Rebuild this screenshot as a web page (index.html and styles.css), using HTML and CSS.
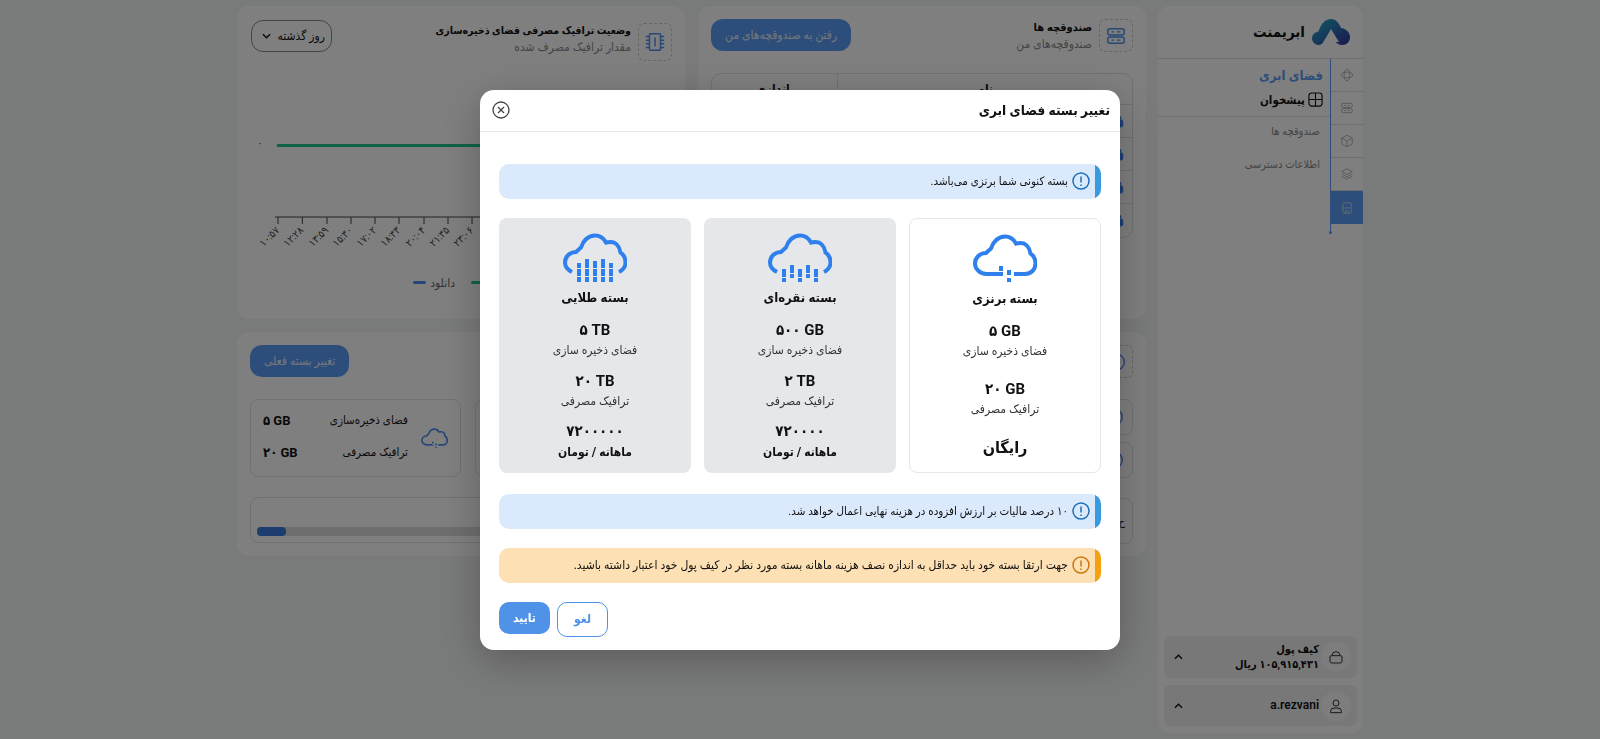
FILE: index.html
```html
<!DOCTYPE html>
<html lang="fa" dir="rtl">

<head>
    <meta charset="UTF-8">
    <meta name="viewport" content="width=device-width, initial-scale=1.0">
    <title>تغییر بسته فضای ابری</title>
    <link rel="stylesheet" href="styles.css">
</head>

<body>
    <svg class="defs">
        <defs>
            <linearGradient id="logo-grad" x1="0" y1="0" x2="1" y2="1">
                <stop offset="0" stop-color="#1cb5c9" />
                <stop offset="1" stop-color="#3b2f9e" />
            </linearGradient>
            <symbol id="i-server" viewBox="0 0 24 24">
                <rect x="3" y="4" width="18" height="7" rx="2.5" />
                <rect x="3" y="13" width="18" height="7" rx="2.5" />
                <path d="M7 7.5h3M13 7.5h4M7 16.5h3M13 16.5h4" />
            </symbol>
            <symbol id="i-chip" viewBox="0 0 24 24">
                <rect x="6" y="3" width="12" height="18" rx="1" />
                <path d="M12 7v10M2 6h4M2 10h4M2 14h4M2 18h4M18 6h4M18 10h4M18 14h4M18 18h4" />
            </symbol>
            <symbol id="i-lock" viewBox="0 0 24 24">
                <path d="M7 11V8a5 5 0 0 1 10 0v3" fill="none" />
                <rect x="4" y="11" width="16" height="11" rx="3" fill="currentColor" />
            </symbol>
        </defs>
    </svg>

    <div class="page">
        <!-- منوی کناری -->
        <aside class="sidebar">
            <div class="logo-row">
                <svg class="logo" viewBox="0 0 38 26">
                    <path fill="url(#logo-grad)" d="M7 26C3 26 0 23 0 19.5C0 15.5 3 13 6.500 12.500C9 5 13 0 19 0C24 0 27 4 29 9C34 9.500 38 13.500 38 18C38 22.500 35 26 30 26C27 26 25 24.500 23.500 23H27L19 10L11 23.500C10 25 8.500 26 7 26Z" />
                </svg>
                <span class="logo-text">ابریمنت</span>
            </div>
            <div class="side-body">
                <nav class="rail">
                    <a class="rail-item"><svg class="rail-icon" viewBox="0 0 24 24"><ellipse cx="12" cy="12" rx="10" ry="5" /><ellipse cx="12" cy="12" rx="5" ry="10" /></svg></a>
                    <a class="rail-item"><svg class="rail-icon"><use href="#i-server" /></svg></a>
                    <a class="rail-item"><svg class="rail-icon" viewBox="0 0 24 24"><path d="M12 2l9 5v10l-9 5-9-5V7zM3 7l9 5 9-5M12 12v10" /></svg></a>
                    <a class="rail-item"><svg class="rail-icon" viewBox="0 0 24 24"><path d="M12 3l9 5-9 5-9-5zM3 12l9 5 9-5M3 16l9 5 9-5" /></svg></a>
                    <a class="rail-item rail-active"><svg class="rail-icon" viewBox="0 0 24 24"><path d="M8 3h8a4 4 0 0 1 4 4v3l-2 2 2 2v3a4 4 0 0 1-4 4H8a3 3 0 0 1-3-3V6a3 3 0 0 1 3-3zM5 12h13M9 21v-4h6v4" /></svg></a>
                </nav>
                <div class="side-menu">
                    <div class="menu-head">
                        <div class="menu-title">فضای ابری</div>
                        <div class="menu-current">
                            <svg class="menu-icon" viewBox="0 0 16 16"><rect x="1" y="1" width="14" height="14" rx="3" /><path d="M8 1v14M1 8h14" /></svg>
                            <span>پیشخوان</span>
                        </div>
                    </div>
                    <a class="menu-link">صندوقچه ها</a>
                    <a class="menu-link">اطلاعات دسترسی</a>
                </div>
            </div>
            <div class="side-foot">
                <div class="foot-box foot-wallet">
                    <span class="foot-circle"><svg class="foot-icon" viewBox="0 0 24 24"><path d="M5 10h14a2 2 0 0 1 2 2v6a3 3 0 0 1-3 3H6a3 3 0 0 1-3-3v-6a2 2 0 0 1 2-2zM6 10a6 6 0 0 1 12 0" /></svg></span>
                    <div class="foot-text">
                        <div>کیف پول</div>
                        <div>۱۰۵,۹۱۵,۴۳۱ ریال</div>
                    </div>
                    <svg class="chev" viewBox="0 0 10 6"><path d="M1 5l4-4 4 4" /></svg>
                </div>
                <div class="foot-box">
                    <span class="foot-circle"><svg class="foot-icon" viewBox="0 0 24 24"><circle cx="12" cy="7.500" r="4.500" /><path d="M4 22v-2a5 5 0 0 1 5-5h6a5 5 0 0 1 5 5v2z" /></svg></span>
                    <div class="foot-text foot-user">a.rezvani</div>
                    <svg class="chev" viewBox="0 0 10 6"><path d="M1 5l4-4 4 4" /></svg>
                </div>
            </div>
        </aside>

        <main class="content">
            <!-- صندوقچه ها -->
            <section class="card">
                <div class="card-head">
                    <span class="dash-icon"><svg class="head-icon"><use href="#i-server" /></svg></span>
                    <div class="head-text">
                        <div class="head-title">صندوقچه ها</div>
                        <div class="head-sub">صندوقچه‌های من</div>
                    </div>
                    <a class="btn-solid">رفتن به صندوقچه‌های من</a>
                </div>
                <div class="table">
                    <div class="t-row t-header">
                        <div class="t-name">نام</div>
                        <div class="t-size">اندازه</div>
                    </div>
                    <div class="t-row"><div class="t-name"><svg class="lock"><use href="#i-lock" /></svg></div><div class="t-size"></div></div>
                    <div class="t-row"><div class="t-name"><svg class="lock"><use href="#i-lock" /></svg></div><div class="t-size"></div></div>
                    <div class="t-row"><div class="t-name"><svg class="lock"><use href="#i-lock" /></svg></div><div class="t-size"></div></div>
                    <div class="t-row"><div class="t-name"><svg class="lock"><use href="#i-lock" /></svg></div><div class="t-size"></div></div>
                </div>
            </section>

            <!-- نمودار ترافیک -->
            <section class="card">
                <div class="card-head">
                    <span class="dash-icon dash-tall"><svg class="head-icon"><use href="#i-chip" /></svg></span>
                    <div class="head-text head-text-low">
                        <div class="head-title head-title-long">وضعیت ترافیک مصرفی فضای ذخیره‌سازی</div>
                        <div class="head-sub">مقدار ترافیک مصرف شده</div>
                    </div>
                    <div class="select">
                        <span>روز گذشته</span>
                        <svg class="chev" viewBox="0 0 10 6"><path d="M1 1l4 4 4-4" /></svg>
                    </div>
                </div>
                <svg class="chart" viewBox="0 0 422 230">
                    <text class="c-label" x="10" y="77" text-anchor="middle">۰</text>
                    <rect class="c-green" x="27" y="74" width="395" height="3" />
                    <path class="c-axis" d="M25 147H422M28 147v7M52.300 147v7M77 147v7M101 147v7M125 147v7M149 147v7M174 147v7M198 147v7M222 147v7M246 147v7" />
                    <text class="c-label" transform="translate(30 161) rotate(-45)" text-anchor="end">۱۰:۵۷</text>
                    <text class="c-label" transform="translate(54 161) rotate(-45)" text-anchor="end">۱۲:۲۸</text>
                    <text class="c-label" transform="translate(79 161) rotate(-45)" text-anchor="end">۱۳:۵۹</text>
                    <text class="c-label" transform="translate(103 161) rotate(-45)" text-anchor="end">۱۵:۳۰</text>
                    <text class="c-label" transform="translate(127 161) rotate(-45)" text-anchor="end">۱۷:۰۲</text>
                    <text class="c-label" transform="translate(151 161) rotate(-45)" text-anchor="end">۱۸:۳۳</text>
                    <text class="c-label" transform="translate(176 161) rotate(-45)" text-anchor="end">۲۰:۰۴</text>
                    <text class="c-label" transform="translate(200 161) rotate(-45)" text-anchor="end">۲۱:۳۵</text>
                    <text class="c-label" transform="translate(224 161) rotate(-45)" text-anchor="end">۲۳:۰۶</text>
                    <rect class="c-blue" x="163" y="211" width="13" height="3" rx="1.5" />
                    <text class="c-legend" x="205" y="217" text-anchor="end">دانلود</text>
                    <rect class="c-green" x="221" y="211" width="13" height="3" rx="1.5" />
                </svg>
            </section>

            <!-- اطلاعات پلن -->
            <section class="card card-low">
                <div class="card-head">
                    <span class="dash-icon dash-blue"><svg class="head-icon" viewBox="0 0 24 24"><circle cx="12" cy="12" r="9" /></svg></span>
                </div>
                <div class="stack">
                    <div class="stack-box"><svg class="head-icon" viewBox="0 0 24 24"><circle cx="12" cy="12" r="9" /></svg></div>
                    <div class="stack-box"><svg class="head-icon" viewBox="0 0 24 24"><circle cx="12" cy="12" r="9" /></svg></div>
                    <div class="stack-box stack-tall"><span class="stack-sign">ح</span></div>
                </div>
            </section>

            <!-- بسته فعلی -->
            <section class="card card-low">
                <div class="card-head card-head-end">
                    <a class="btn-solid">تغییر بسته فعلی</a>
                </div>
                <div class="plans">
                    <div class="plan-box">
                        <svg class="plan-cloud" viewBox="0 0 64 50">
                            <path d="M26 40H13.500C7 40 2 35 2 29.500C2 23.500 7 19 13 19L18 14.500C20 7.500 25.500 2.500 32 2.500C37 2.500 40.500 5 43 9.500C44.500 9 46 9 47.500 9C52.500 9 56.500 13 57.500 19.500C60.500 21.500 62.500 25.500 62.500 29.500C62.500 35.500 58 40 52 40H41" />
                            <path d="M28 33v9M36 37v10" stroke-dasharray="4 3" />
                        </svg>
                        <div class="plan-rows">
                            <div class="plan-row"><span>فضای ذخیره‌سازی</span><b dir="ltr">۵ GB</b></div>
                            <div class="plan-row"><span>ترافیک مصرفی</span><b dir="ltr">۲۰ GB</b></div>
                        </div>
                    </div>
                    <div class="plan-box"></div>
                </div>
                <div class="usage">
                    <div class="usage-track"><div class="usage-fill" style="width: 7%"></div></div>
                </div>
            </section>
        </main>
    </div>

    <!-- مودال تغییر بسته -->
    <div class="overlay">
        <div class="modal">
            <header class="modal-head">
                <h2 class="modal-title">تغییر بسته فضای ابری</h2>
                <svg class="close" viewBox="0 0 18 18"><circle cx="9" cy="9" r="8" /><path d="M6 6l6 6M12 6l-6 6" /></svg>
            </header>
            <div class="modal-body">
                <div class="alert">
                    <svg class="alert-icon" viewBox="0 0 18 18"><circle cx="9" cy="9" r="8" /><path d="M9 4.500v6M9 12.500v1.500" /></svg>
                    <span>بسته کنونی شما برنزی می‌باشد.</span>
                </div>

                <div class="packs">
                    <div class="pack pack-current">
                        <svg class="pack-icon" viewBox="0 0 64 50">
                            <path d="M26 40H13.500C7 40 2 35 2 29.500C2 23.500 7 19 13 19L18 14.500C20 7.500 25.500 2.500 32 2.500C37 2.500 40.500 5 43 9.500C44.500 9 46 9 47.500 9C52.500 9 56.500 13 57.500 19.500C60.500 21.500 62.500 25.500 62.500 29.500C62.500 35.500 58 40 52 40H41" />
                            <g class="bars">
                                <rect x="26" y="32" width="4" height="5" /><rect x="26" y="38" width="4" height="4" />
                                <rect x="34" y="36" width="4" height="5" /><rect x="34" y="44" width="4" height="4" />
                            </g>
                        </svg>
                        <div class="pack-name">بسته برنزی</div>
                        <div class="pack-value pack-value-first" dir="ltr">۵ GB</div>
                        <div class="pack-label">فضای ذخیره سازی</div>
                        <div class="pack-value pack-value-wide" dir="ltr">۲۰ GB</div>
                        <div class="pack-label">ترافیک مصرفی</div>
                        <div class="pack-free">رایگان</div>
                    </div>

                    <div class="pack">
                        <svg class="pack-icon" viewBox="0 0 64 50">
                            <path d="M9 39C5 37 2 33.500 2 29.500C2 23.500 7 19 13 19L18 14.500C20 7.500 25.500 2.500 32 2.500C37 2.500 40.500 5 43 9.500C44.500 9 46 9 47.500 9C52.500 9 56.500 13 57.500 19.500C60.500 21.500 62.500 25.500 62.500 29.500C62.500 33.500 60 37 56 39" />
                            <g class="bars">
                                <rect x="14" y="36" width="4" height="8" /><rect x="14" y="45" width="4" height="4" />
                                <rect x="22" y="32" width="4" height="8" /><rect x="22" y="41" width="4" height="4" />
                                <rect x="30" y="36" width="4" height="8" /><rect x="30" y="45" width="4" height="4" />
                                <rect x="38" y="32" width="4" height="8" /><rect x="38" y="41" width="4" height="4" />
                                <rect x="46" y="36" width="4" height="8" /><rect x="46" y="45" width="4" height="4" />
                            </g>
                        </svg>
                        <div class="pack-name">بسته نقره‌ای</div>
                        <div class="pack-value pack-value-first" dir="ltr">۵۰۰ GB</div>
                        <div class="pack-label">فضای ذخیره سازی</div>
                        <div class="pack-value" dir="ltr">۲ TB</div>
                        <div class="pack-label">ترافیک مصرفی</div>
                        <div class="pack-value pack-price">۷۲۰۰۰۰</div>
                        <div class="pack-unit">ماهانه / تومان</div>
                    </div>

                    <div class="pack">
                        <svg class="pack-icon" viewBox="0 0 64 50">
                            <path d="M9 39C5 37 2 33.500 2 29.500C2 23.500 7 19 13 19L18 14.500C20 7.500 25.500 2.500 32 2.500C37 2.500 40.500 5 43 9.500C44.500 9 46 9 47.500 9C52.500 9 56.500 13 57.500 19.500C60.500 21.500 62.500 25.500 62.500 29.500C62.500 33.500 60 37 56 39" />
                            <g class="bars">
                                <rect x="14" y="30" width="4" height="5" /><rect x="14" y="36" width="4" height="7" /><rect x="14" y="44" width="4" height="5" />
                                <rect x="22" y="26" width="4" height="9" /><rect x="22" y="36" width="4" height="7" /><rect x="22" y="44" width="4" height="5" />
                                <rect x="30" y="28" width="4" height="7" /><rect x="30" y="36" width="4" height="7" /><rect x="30" y="44" width="4" height="5" />
                                <rect x="38" y="26" width="4" height="9" /><rect x="38" y="36" width="4" height="7" /><rect x="38" y="44" width="4" height="5" />
                                <rect x="46" y="30" width="4" height="5" /><rect x="46" y="36" width="4" height="7" /><rect x="46" y="44" width="4" height="5" />
                            </g>
                        </svg>
                        <div class="pack-name">بسته طلایی</div>
                        <div class="pack-value pack-value-first" dir="ltr">۵ TB</div>
                        <div class="pack-label">فضای ذخیره سازی</div>
                        <div class="pack-value" dir="ltr">۲۰ TB</div>
                        <div class="pack-label">ترافیک مصرفی</div>
                        <div class="pack-value pack-price">۷۲۰۰۰۰۰</div>
                        <div class="pack-unit">ماهانه / تومان</div>
                    </div>
                </div>

                <div class="alert">
                    <svg class="alert-icon" viewBox="0 0 18 18"><circle cx="9" cy="9" r="8" /><path d="M9 4.500v6M9 12.500v1.500" /></svg>
                    <span>۱۰ درصد مالیات بر ارزش افزوده در هزینه نهایی اعمال خواهد شد.</span>
                </div>
                <div class="alert alert-warn">
                    <svg class="alert-icon" viewBox="0 0 18 18"><circle cx="9" cy="9" r="8" /><path d="M9 4.500v6M9 12.500v1.500" /></svg>
                    <span>جهت ارتقا بسته خود باید حداقل به اندازه نصف هزینه ماهانه بسته مورد نظر در کیف پول خود اعتبار داشته باشید.</span>
                </div>

                <div class="actions">
                    <a class="btn-cancel">لغو</a>
                    <a class="btn-ok">تایید</a>
                </div>
            </div>
        </div>
    </div>
</body>

</html>
```

FILE: styles.css
```css
* {
    margin: 0;
    padding: 0;
    box-sizing: border-box;
}

html,
body {
    height: 100%;
    overflow: hidden;
}

body {
    background-color: #f3f4f5;
    color: #111;
    font-family: "Roboto", "DejaVu Sans Condensed", "DejaVu Sans", sans-serif;
    font-size: 12px;
}

svg {
    display: block;
    flex-shrink: 0;
}

.defs {
    width: 0;
    height: 0;
    position: absolute;
}

.page {
    display: flex;
    gap: 12px;
    width: 1126px;
    margin: 0 auto;
    padding-top: 6px;
}

/* sidebar */
.sidebar {
    width: 205px;
    height: 727px;
    background: #fff;
    border-radius: 12px;
    display: flex;
    flex-direction: column;
    flex-shrink: 0;
}

.logo-row {
    height: 53px;
    display: flex;
    align-items: center;
    gap: 7px;
    padding: 0 13px 0 0;
    border-bottom: 1px solid #ddd;
}

.logo {
    width: 38px;
    height: 26px;
}

.logo-text {
    font-size: 15px;
    font-weight: 700;
}

.side-body {
    display: flex;
}

.rail {
    width: 33px;
    padding-bottom: 10px;
    position: relative;
    flex-shrink: 0;
    border-left: 1px solid #5a9df5;
}

.rail::after {
    content: "";
    position: absolute;
    left: -2px;
    bottom: 0;
    width: 3px;
    height: 3px;
    border-radius: 50%;
    background: #5a9df5;
}

.rail-item {
    height: 33px;
    display: flex;
    align-items: center;
    justify-content: center;
    border-bottom: 1px solid #ddd;
}

.rail-active {
    background: #5a9df5;
    border-bottom: 0;
}

.rail-icon {
    width: 14px;
    height: 14px;
    fill: none;
    stroke: #aaa;
    stroke-width: 1.5;
}

.rail-active .rail-icon {
    stroke: #cfd8e6;
}

.side-menu {
    flex: 1;
}

.menu-head {
    height: 58px;
    padding: 7px 7px 0 0;
    border-bottom: 1px solid #ddd;
}

.menu-title {
    color: #5a9df5;
    font-size: 13px;
    font-weight: 700;
    line-height: 20px;
}

.menu-current {
    display: flex;
    align-items: center;
    gap: 3px;
    margin-top: 6px;
    font-size: 11.5px;
    font-weight: 700;
}

.menu-icon {
    width: 15px;
    height: 15px;
    fill: none;
    stroke: #111;
    stroke-width: 1.2;
}

.menu-link {
    display: block;
    height: 33px;
    line-height: 30px;
    padding-right: 10px;
    color: #888;
    font-size: 11px;
}

.side-foot {
    margin-top: auto;
    padding: 0 6px 7px;
    display: flex;
    flex-direction: column;
    gap: 7px;
}

.foot-box {
    height: 41px;
    background: #f0f0f0;
    border-radius: 6px;
    display: flex;
    align-items: center;
    gap: 2px;
    padding: 0 6px 0 10px;
}

.foot-wallet {
    height: 42px;
}

.foot-circle {
    width: 30px;
    height: 30px;
    border-radius: 50%;
    background: #fafafa;
    display: flex;
    align-items: center;
    justify-content: center;
    flex-shrink: 0;
}

.foot-icon {
    width: 16px;
    height: 16px;
    fill: none;
    stroke: #333;
    stroke-width: 1.5;
}

.foot-text {
    flex: 1;
    font-size: 11px;
    font-weight: 600;
    line-height: 15px;
}

.foot-user {
    font-size: 12px;
}

.chev {
    width: 9px;
    height: 6px;
    fill: none;
    stroke: #111;
    stroke-width: 1.5;
}

/* main cards */
.content {
    display: grid;
    grid-template-columns: 448px 448px;
    grid-template-rows: 313px 224px;
    gap: 13px;
}

.card {
    background: #fff;
    border-radius: 12px;
    padding: 13px;
}

.card-head {
    display: flex;
    align-items: flex-start;
    gap: 7px;
}

.card-head-end {
    justify-content: flex-end;
}

.dash-icon {
    width: 34px;
    height: 33px;
    border: 1px dashed #ccc;
    border-radius: 6px;
    display: flex;
    align-items: center;
    justify-content: center;
    flex-shrink: 0;
}

.dash-tall {
    height: 38px;
    margin-top: 4px;
}

.head-icon {
    width: 22px;
    height: 22px;
    fill: none;
    stroke: #4f8fec;
    stroke-width: 1.6;
}

.head-text {
    flex: 1;
    line-height: 17px;
    font-size: 11px;
}

.head-text-low {
    margin-top: 3px;
}

.head-title {
    font-weight: 700;
}

.head-title-long {
    font-size: 10.5px;
}

.head-sub {
    color: #888;
    font-size: 12px;
}

.btn-solid {
    height: 32px;
    padding: 0 14px;
    background: #5a9df5;
    color: #e8eef8;
    border-radius: 12px;
    display: flex;
    align-items: center;
    font-size: 12px;
}

.select {
    width: 81px;
    height: 32px;
    margin-top: 1px;
    margin-left: 1px;
    border: 1px solid #888;
    border-radius: 12px;
    display: flex;
    align-items: center;
    justify-content: space-between;
    padding: 0 6px 0 10px;
    font-size: 12px;
}

.table {
    margin-top: 20px;
    border: 1px solid #e2e2e2;
    border-radius: 10px;
    overflow: hidden;
}

.t-row {
    display: grid;
    grid-template-columns: 295px 1fr;
    height: 33px;
    border-bottom: 1px solid #e2e2e2;
}

.t-row:last-child {
    border-bottom: 0;
}

.t-header {
    height: 31px;
    text-align: center;
    font-weight: 600;
    line-height: 30px;
}

.t-name {
    border-left: 1px solid #e2e2e2;
    padding: 9px 7px 0 0;
}

.t-header .t-name {
    padding: 0;
}

.lock {
    width: 14px;
    height: 14px;
    color: #3a7ef0;
    fill: none;
    stroke: #3a7ef0;
    stroke-width: 2;
}

.chart {
    width: 422px;
    height: 230px;
    direction: ltr;
    margin-top: 9px;
}

.c-green {
    fill: #20c58a;
}

.c-blue {
    fill: #4a8cf0;
}

.c-axis {
    fill: none;
    stroke: #444;
    stroke-width: 1;
}

.c-label {
    font-size: 10.5px;
    fill: #444;
}

.c-legend {
    font-size: 12px;
    fill: #666;
}

.stack {
    margin-top: 21px;
    display: flex;
    flex-direction: column;
    gap: 7px;
}

.stack-box {
    height: 36px;
    border: 1px solid #e2e2e2;
    border-radius: 8px;
    display: flex;
    align-items: center;
    padding-right: 7px;
}

.stack-tall {
    height: 46px;
    margin-top: 13px;
}

.stack-sign {
    font-size: 11px;
}

.plans {
    margin-top: 22px;
    display: grid;
    grid-template-columns: 211px 1fr;
    gap: 14px;
    direction: ltr;
}

.plan-box {
    height: 78px;
    border: 1px solid #e2e2e2;
    border-radius: 8px;
    direction: rtl;
    display: flex;
    align-items: center;
    gap: 13px;
    padding: 0 12px 0 12px;
}

.plan-cloud {
    width: 27px;
    height: 21px;
    fill: none;
    stroke: #4f8fec;
    stroke-width: 4;
}

.plan-rows {
    flex: 1;
    padding-bottom: 4px;
}

.plan-row {
    display: flex;
    justify-content: space-between;
    height: 32px;
    align-items: center;
    font-size: 11.5px;
}

.plan-row b {
    font-size: 13px;
}

.usage {
    margin-top: 20px;
    height: 46px;
    border: 1px solid #e2e2e2;
    border-radius: 8px;
    padding: 29px 6px 0;
    direction: ltr;
}

.usage-track {
    height: 9px;
    background: #ddd;
    border-radius: 4px;
}

.usage-fill {
    height: 9px;
    background: #3a7bdc;
    border-radius: 4px;
}

/* modal */
.overlay {
    position: fixed;
    inset: 0;
    background: rgba(0, 0, 0, 0.5);
    display: flex;
    align-items: center;
    justify-content: center;
}

.modal {
    width: 640px;
    height: 560px;
    background: #fff;
    border-radius: 14px;
    box-shadow: 0 10px 40px rgba(0, 0, 0, 0.25);
}

.modal-head {
    height: 42px;
    display: flex;
    align-items: center;
    justify-content: space-between;
    padding: 0 10px 0 12px;
    border-bottom: 1px solid #e5e7eb;
}

.modal-title {
    font-size: 13.5px;
    font-weight: 700;
}

.close {
    width: 18px;
    height: 18px;
    fill: none;
    stroke: #444;
    stroke-width: 1.3;
}

.modal-body {
    padding: 32px 19px 0;
}

.alert {
    height: 35px;
    background: #dbe9fd;
    border-radius: 10px;
    display: flex;
    align-items: center;
    gap: 4px;
    font-size: 11.5px;
    margin-bottom: 19px;
    overflow: hidden;
}

.alert::before {
    content: "";
    width: 6px;
    height: 100%;
    margin-left: 1px;
    background: #3a9ae0;
    flex-shrink: 0;
}

.alert-icon {
    width: 18px;
    height: 18px;
    fill: none;
    stroke: #1d70b8;
    stroke-width: 1.5;
}

.alert-warn {
    background: #fde0b4;
    font-size: 12px;
}

.alert-warn::before {
    background: #f5a00f;
}

.alert-warn .alert-icon {
    stroke: #c8780c;
}

.packs {
    display: grid;
    grid-template-columns: repeat(3, 1fr);
    gap: 13px;
    margin-bottom: 21px;
}

.pack {
    height: 255px;
    background: #e5e7eb;
    border-radius: 8px;
    padding-top: 15px;
    text-align: center;
}

.pack-current {
    background: #fff;
    border: 1px solid #e5e7eb;
}

.pack-icon {
    width: 64px;
    height: 50px;
    margin: 0 auto;
    fill: none;
    stroke: #2f80ed;
    stroke-width: 4;
}

.bars {
    fill: #2f80ed;
    stroke: none;
}

.pack-name {
    margin-top: 5px;
    font-size: 13px;
    font-weight: 700;
    line-height: 20px;
}

.pack-value {
    margin-top: 12px;
    font-size: 15px;
    font-weight: 700;
    line-height: 20px;
}

.pack-value-first {
    margin-top: 12px;
}

.pack-value-wide {
    margin-top: 19px;
}

.pack-label {
    margin-top: 1px;
    font-size: 12px;
    line-height: 18px;
    color: #333;
}

.pack-price {
    margin-top: 11px;
}

.pack-unit {
    margin-top: 2px;
    font-size: 12px;
    font-weight: 700;
    line-height: 18px;
}

.pack-free {
    margin-top: 20px;
    font-size: 16px;
    font-weight: 700;
}

.actions {
    display: flex;
    justify-content: flex-end;
    gap: 7px;
}

.btn-cancel,
.btn-ok {
    width: 51px;
    border-radius: 10px;
    display: flex;
    align-items: center;
    justify-content: center;
    font-size: 12px;
    font-weight: 700;
}

.btn-cancel {
    height: 35px;
    border: 1px solid #4f92e8;
    color: #4f92e8;
}

.btn-ok {
    height: 32px;
    background: #4f92e8;
    color: #fff;
}
```
